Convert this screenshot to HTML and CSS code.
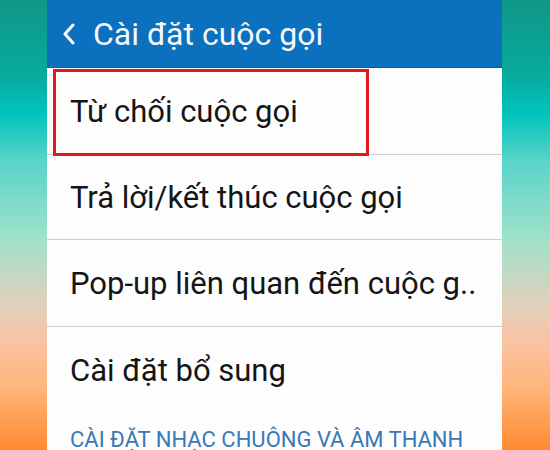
FILE: index.html
```html
<!DOCTYPE html>
<html lang="vi">
<head>
<meta charset="utf-8">
<link rel="stylesheet" href="styles.css">
</head>
<body>
<div class="stage">
  <div class="side"></div>
  <div class="phone">
    <div class="appbar">
      <svg class="back" width="14" height="22" viewBox="0 0 14 22"><path d="M11 2 L3 11 L11 20" fill="none" stroke="#fff" stroke-width="3" stroke-linecap="round" stroke-linejoin="round"/></svg>
      <span class="title">Cài đặt cuộc gọi</span>
    </div>
    <div class="list">
      <div class="item">Từ chối cuộc gọi</div>
      <div class="item short">Trả lời/kết thúc cuộc gọi</div>
      <div class="item">Pop-up liên quan đến cuộc g..</div>
      <div class="item last">Cài đặt bổ sung</div>
      <div class="section">CÀI ĐẶT NHẠC CHUÔNG VÀ ÂM THANH</div>
    </div>
    <div class="highlight"></div>
  </div>
  <div class="side"></div>
</div>
</body>
</html>
```
FILE: styles.css
```css
html, body {
  margin: 0;
  padding: 0;
  width: 550px;
  height: 450px;
  overflow: hidden;
}
body {
  background: linear-gradient(180deg, #0f9787 0%, #07ab9e 17%, #00c3bc 25%, #5ad4c9 36%, #9fe2c9 53%, #e2d0bb 68%, #f9c3a2 76%, #ffb57b 86%, #ff8a30 100%);
  font-family: Roboto, "Noto Sans", sans-serif;
}
.stage {
  display: flex;
  height: 450px;
}
.side { flex: 0 0 47px; }
.side:last-child { flex: 0 0 48px; }
.phone {
  position: relative;
  flex: 0 0 455px;
  background: #fdfdfd;
  overflow: hidden;
}
.appbar {
  height: 67px;
  background: #0b70bd;
  border-bottom: 1px solid #0a5c9c;
  display: flex;
  align-items: center;
  color: #fff;
}
.back { margin-left: 15px; margin-right: 17px; }
.title {
  font-size: 32px;
  color: #f4f8fb;
}
.list { display: flex; flex-direction: column; }
.item {
  flex: 0 0 86px;
  border-bottom: 1px solid #cfcfcf;
  display: flex;
  align-items: center;
  padding-left: 23px;
  font-size: 31px;
  color: #151515;
  white-space: nowrap;
}
.item.short { flex-basis: 84px; }
.item.last { border-bottom: none; }
.section {
  padding-left: 23px;
  padding-top: 14px;
  font-size: 22px;
  color: #3b78b4;
  white-space: nowrap;
}
.highlight {
  position: absolute;
  left: 6px;
  top: 69px;
  width: 310px;
  height: 81px;
  border: 3px solid #e3191c;
}
```
